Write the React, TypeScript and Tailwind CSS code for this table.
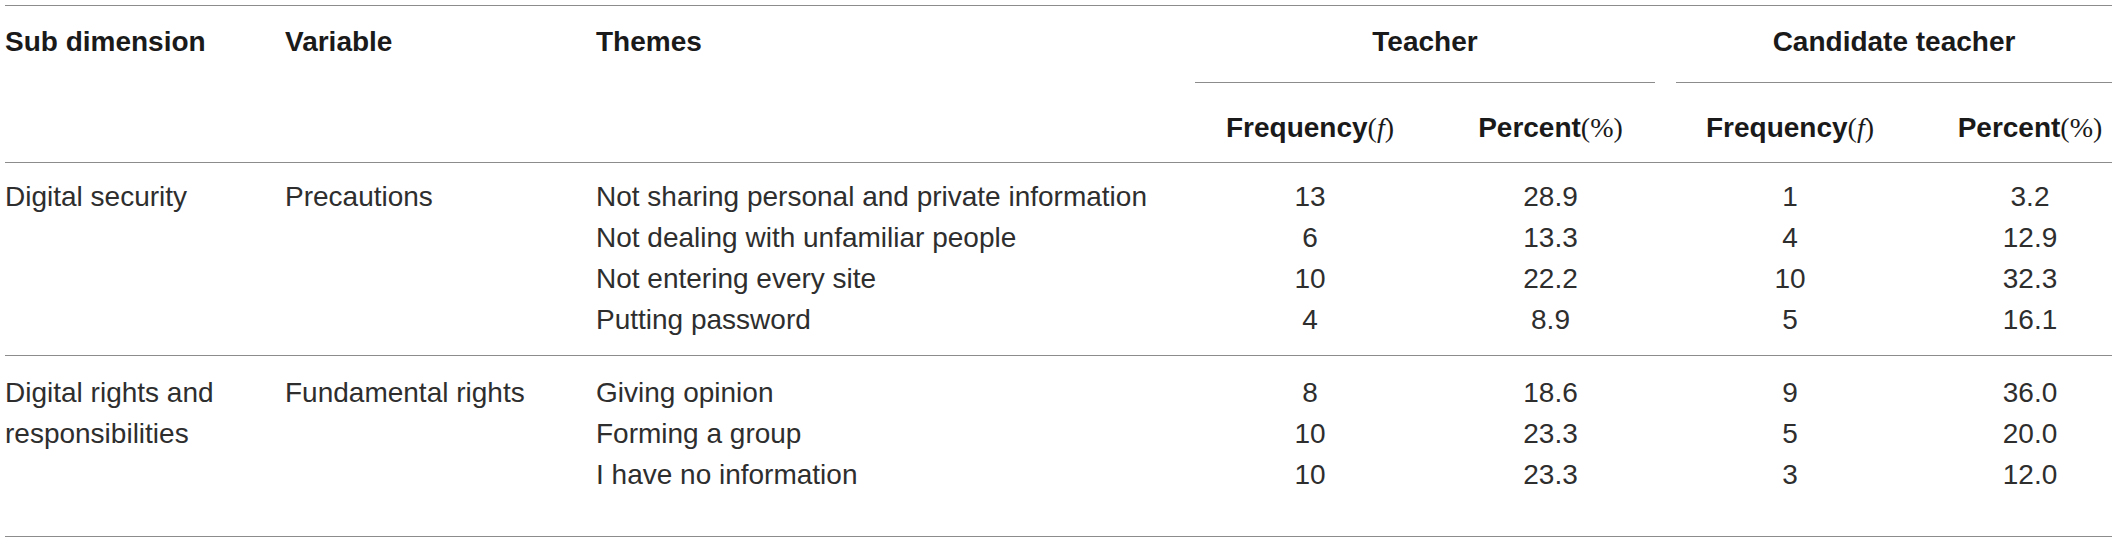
import React from 'react';

const cols = 'grid grid-cols-[280px_311px_599px_230px_251px_228px_208px]';

const sectionOne = [
  ['Not sharing personal and private information', '13', '28.9', '1', '3.2'],
  ['Not dealing with unfamiliar people', '6', '13.3', '4', '12.9'],
  ['Not entering every site', '10', '22.2', '10', '32.3'],
  ['Putting password', '4', '8.9', '5', '16.1'],
];

const sectionTwo = [
  ['Giving opinion', '8', '18.6', '9', '36.0'],
  ['Forming a group', '10', '23.3', '5', '20.0'],
  ['I have no information', '10', '23.3', '3', '12.0'],
];

const Freq = () => (
  <span>
    Frequency
    <span className="font-['Liberation_Serif',serif] font-normal">
      (<i>f</i>)
    </span>
  </span>
);

const Pct = () => (
  <span>
    Percent
    <span className="font-['Liberation_Serif',serif] font-normal">(%)</span>
  </span>
);

interface SectionProps {
  dimension: string;
  variable: string;
  rows: string[][];
  span: string;
  pad: string;
}

const Section: React.FC<SectionProps> = ({ dimension, variable, rows, span, pad }) => (
  <div className={`${cols} ${pad} border-b border-[#8c8c8c] leading-[41px]`}>
    <div className={span}>{dimension}</div>
    <div className={span}>{variable}</div>
    {rows.map((r, i) => (
      <React.Fragment key={i}>
        <div>{r[0]}</div>
        <div className="text-center">{r[1]}</div>
        <div className="text-center">{r[2]}</div>
        <div className="text-center">{r[3]}</div>
        <div className="text-center pl-[44px]">{r[4]}</div>
      </React.Fragment>
    ))}
  </div>
);

export default function App() {
  return (
    <div className="w-[2117px] h-[543px] bg-white pt-[5px] pl-[5px] font-['Liberation_Sans',Arial,sans-serif] text-[28px] text-[#2e2e2e]">
      <div className="w-[2107px] border-t border-[#8c8c8c]">
        {/* header */}
        <div className="border-b border-[#8c8c8c] font-bold text-[#1a1a1a] leading-[32px]">
          <div className={`${cols} h-[76px] pt-[20px]`}>
            <div>Sub dimension</div>
            <div>Variable</div>
            <div>Themes</div>
            <div className="col-span-2 text-center pr-[21px]">Teacher</div>
            <div className="col-span-2 text-center">Candidate teacher</div>
          </div>
          <div className={cols}>
            <div className="col-span-3" />
            <div className="col-span-2 mr-[21px] border-t border-[#8c8c8c]" />
            <div className="col-span-2 border-t border-[#8c8c8c]" />
          </div>
          <div className={`${cols} h-[79px] pt-[29px]`}>
            <div className="col-span-3" />
            <div className="text-center"><Freq /></div>
            <div className="text-center"><Pct /></div>
            <div className="text-center"><Freq /></div>
            <div className="text-center pl-[44px]"><Pct /></div>
          </div>
        </div>
        <Section
          dimension="Digital security"
          variable="Precautions"
          rows={sectionOne}
          span="row-span-4"
          pad="pt-[13px] pb-[15px]"
        />
        <Section
          dimension="Digital rights and responsibilities"
          variable="Fundamental rights"
          rows={sectionTwo}
          span="row-span-3"
          pad="pt-[16px] pb-[41px]"
        />
      </div>
    </div>
  );
}
